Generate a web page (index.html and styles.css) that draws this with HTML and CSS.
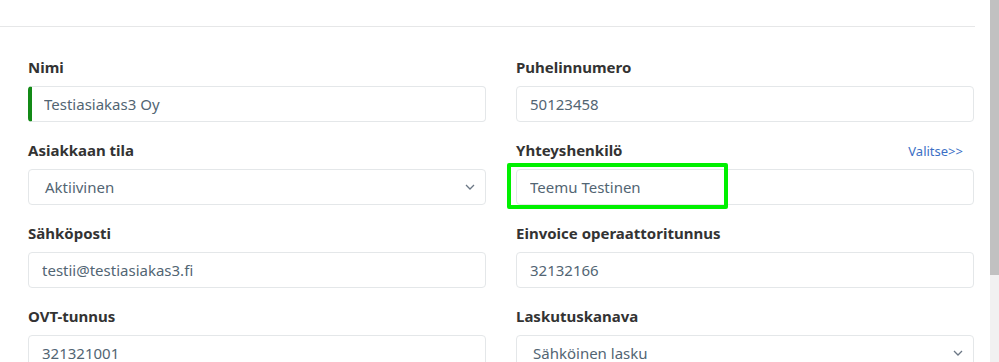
FILE: index.html
```html
<!DOCTYPE html>
<html>
<head>
    <title>Asiakas</title>
    <link rel="stylesheet" href="styles.css">
</head>
<body>
    <div class="page">
        <div class="content">
            <div class="topbar"></div>
            <form class="customer-form">
                <div class="field">
                    <label>Nimi</label>
                    <input type="text" class="input input-valid" value="Testiasiakas3 Oy">
                </div>
                <div class="field">
                    <label>Puhelinnumero</label>
                    <input type="text" class="input" value="50123458">
                </div>
                <div class="field">
                    <label>Asiakkaan tila</label>
                    <div class="select">
                        <span>Aktiivinen</span>
                        <svg class="chevron" width="10" height="6" viewBox="0 0 10 6"><path d="M1 1l4 4 4-4" fill="none" stroke="#6b7785" stroke-width="1.3"/></svg>
                    </div>
                </div>
                <div class="field contact">
                    <div class="label-row">
                        <label>Yhteyshenkilö</label>
                        <a href="#" class="pick-link">Valitse&gt;&gt;</a>
                    </div>
                    <input type="text" class="input" value="Teemu Testinen">
                    <div class="highlight"></div>
                </div>
                <div class="field">
                    <label>Sähköposti</label>
                    <input type="text" class="input" value="testii@testiasiakas3.fi">
                </div>
                <div class="field">
                    <label>Einvoice operaattoritunnus</label>
                    <input type="text" class="input" value="32132166">
                </div>
                <div class="field">
                    <label>OVT-tunnus</label>
                    <input type="text" class="input" value="321321001">
                </div>
                <div class="field">
                    <label>Laskutuskanava</label>
                    <div class="select">
                        <span>Sähköinen lasku</span>
                        <svg class="chevron" width="10" height="6" viewBox="0 0 10 6"><path d="M1 1l4 4 4-4" fill="none" stroke="#6b7785" stroke-width="1.3"/></svg>
                    </div>
                </div>
            </form>
        </div>
        <div class="scrollbar"><div class="thumb"></div></div>
    </div>
</body>
</html>
```

FILE: styles.css
```css
body {
    margin: 0;
    background-color: #fff;
    font-family: "Noto Sans", "Open Sans", sans-serif;
    overflow: hidden;
}
.page {
    display: flex;
    height: 362px;
}
.content {
    width: 975px;
}
.topbar {
    height: 26px;
    border-bottom: 1px solid #e6e7e8;
}
.customer-form {
    display: grid;
    grid-template-columns: 458px 458px;
    column-gap: 30px;
    row-gap: 18px;
    padding: 30px 0 0 28px;
}
.field {
    display: flex;
    flex-direction: column;
    gap: 9px;
}
.contact {
    position: relative;
}
label {
    font-size: 15px;
    line-height: 20px;
    font-weight: bold;
    color: #333;
}
.label-row {
    display: flex;
    justify-content: space-between;
    align-items: flex-end;
}
.pick-link {
    font-size: 13px;
    line-height: 18px;
    color: #3b6fc5;
    text-decoration: none;
    margin-right: 11px;
}
.input, .select {
    box-sizing: border-box;
    height: 36px;
    border: 1px solid #e4e7e9;
    border-radius: 4px;
    padding: 0 13px;
    font-family: inherit;
    font-size: 15px;
    color: #526573;
    background: #fff;
}
.input-valid {
    border-left: 4px solid #138a17;
    padding-left: 12px;
}
.select {
    display: flex;
    align-items: center;
    justify-content: space-between;
    padding: 0 10px 0 16px;
}
.highlight {
    position: absolute;
    left: -9px;
    top: 23px;
    width: 221px;
    height: 46px;
    box-sizing: border-box;
    border: 4px solid #00f000;
    border-radius: 2px;
}
.scrollbar {
    margin-left: 15px;
    width: 9px;
    background: #f1f1f1;
}
.thumb {
    height: 275px;
    background: #c1c1c1;
}
```
